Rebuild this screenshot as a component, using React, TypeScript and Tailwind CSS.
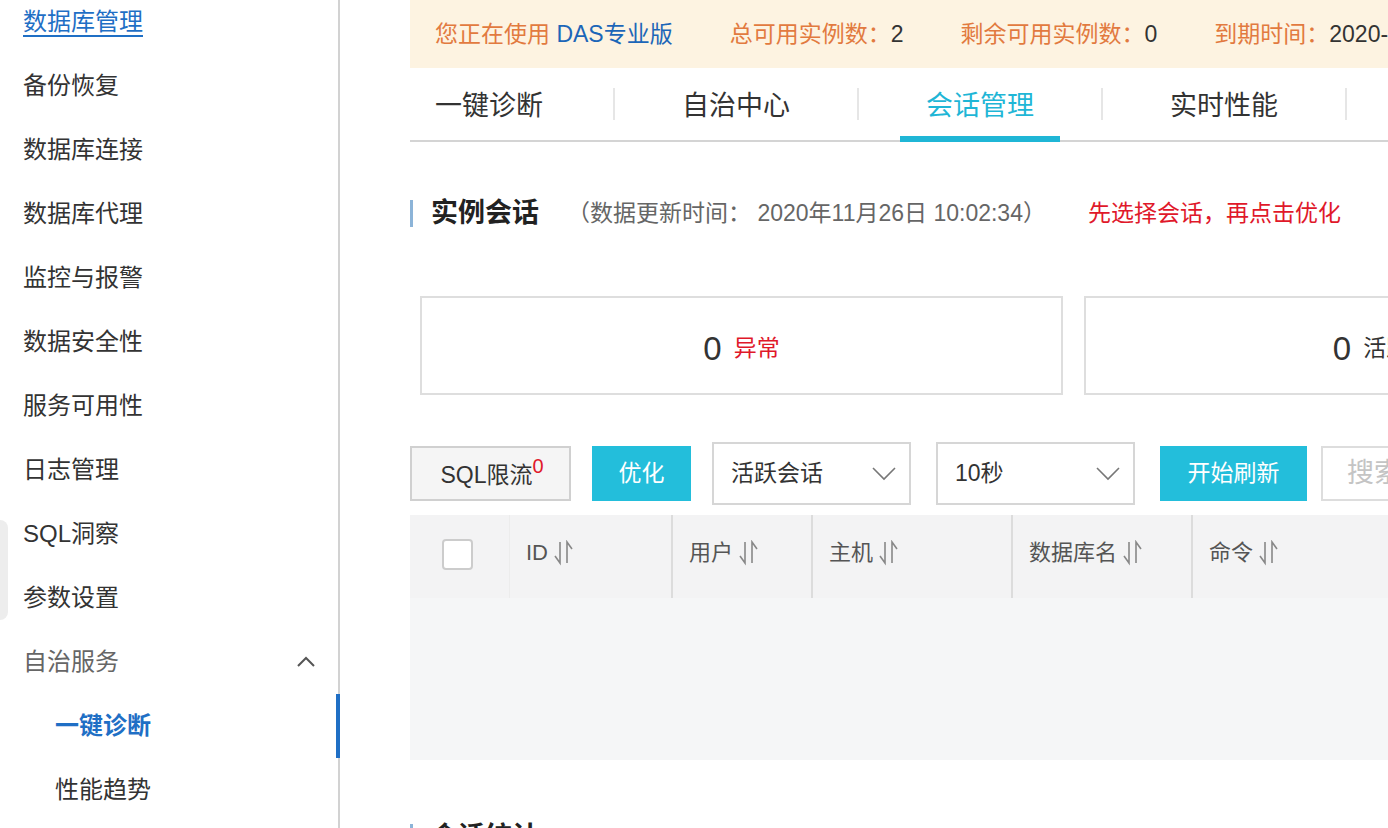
import * as React from "react";

/* DAS console — 会话管理 page: sidebar nav + banner, tabs, session stats, toolbar, table */

const NAV = [
  "数据库管理",
  "备份恢复",
  "数据库连接",
  "数据库代理",
  "监控与报警",
  "数据安全性",
  "服务可用性",
  "日志管理",
  "SQL洞察",
  "参数设置",
];

const TABS = ["自治中心", "会话管理", "实时性能"];

const COLS = [
  { label: "ID", w: "w-[161px]" },
  { label: "用户", w: "w-[140px]" },
  { label: "主机", w: "w-[200px]" },
  { label: "数据库名", w: "w-[180px]" },
  { label: "命令", w: "w-[200px]" },
];

export default function App() {
  return (
    <div className="flex h-[828px] w-[1388px] overflow-hidden bg-white font-['Liberation_Sans','Noto_Sans_CJK_SC',sans-serif] text-[#333]">
      <Sidebar />
      <main className="min-w-0 flex-1 overflow-hidden pl-[70px]">
        <div className="w-[1400px]">
          <Banner />
          <Tabs />
          <SectionTitle title="实例会话" className="mt-[58px]">
            <span className="ml-[28px] text-[23px] text-[#666]">
              （数据更新时间： 2020年11月26日 10:02:34）
            </span>
            <span className="ml-[42px] text-[23px] text-[#e0182a]">
              先选择会话，再点击优化
            </span>
          </SectionTitle>

          {/* stat cards */}
          <div className="mt-[69px] flex gap-[21px] pl-[10px]">
            <StatCard label="异常" labelClass="text-[#e0182a]" />
            <StatCard label="活跃会话数" labelClass="text-[#333]" />
          </div>

          <Toolbar />
          <SessionTable />

          <SectionTitle title="会话统计" className="mt-[64px]" />
        </div>
      </main>
    </div>
  );
}

/* ─── sidebar ─────────────────────────────────────────────────────────── */
function Sidebar() {
  return (
    <aside className="relative w-[340px] shrink-0 border-r-2 border-[#d2d2d2]">
      {/* scrollbar-like tab on the left edge */}
      <div className="absolute left-0 top-[520px] h-[100px] w-[8px] rounded-r-[8px] bg-[#ededed]" />
      <ul className="-mt-[10px] text-[24px]">
        {NAV.map((n, i) => (
          <li key={n} className="flex h-16 items-center pl-[23px]">
            {i === 0 ? (
              <span className="text-[#1f6fc5] underline decoration-2 underline-offset-[5px]">{n}</span>
            ) : (
              <span>{n}</span>
            )}
          </li>
        ))}
        <li className="flex h-16 items-center justify-between pl-[23px] pr-[22px] text-[#666]">
          <span>自治服务</span>
          <svg width="20" height="12" viewBox="0 0 20 12" fill="none" stroke="#555" strokeWidth="2">
            <path d="M2 10 L10 2 L18 10" />
          </svg>
        </li>
        <li className="relative flex h-16 items-center pl-[55px] font-bold text-[#1f6fc5]">
          一键诊断
          <span className="absolute -right-[2px] top-0 h-full w-[4px] bg-[#1f6fc5]" />
        </li>
        <li className="flex h-16 items-center pl-[55px]">性能趋势</li>
      </ul>
    </aside>
  );
}

/* ─── banner + tabs ───────────────────────────────────────────────────── */
function Banner() {
  return (
    <div className="flex h-[68px] items-center gap-[57px] bg-[#fdf3e1] pl-[25px] text-[23px] text-[#e27a3f]">
      <span>
        您正在使用 <span className="text-[#1c66b8]">DAS专业版</span>
      </span>
      <span>
        总可用实例数：<span className="text-[#333]">2</span>
      </span>
      <span>
        剩余可用实例数：<span className="text-[#333]">0</span>
      </span>
      <span>
        到期时间：<span className="text-[#333]">2020-12-26</span>
      </span>
    </div>
  );
}

function Tabs() {
  return (
    <div className="flex h-[74px] items-center border-b-2 border-[#d4d4d4] text-[27px]">
      <div className="flex h-full w-[203px] items-center pl-[25px] pt-[4px]">一键诊断</div>
      {TABS.map((t) => {
        const active = t === "会话管理";
        return (
          <React.Fragment key={t}>
            <span className="h-[32px] w-[2px] bg-[#e6e6e6]" />
            <div className="flex h-full w-[242px] flex-col items-center">
              <div className={`flex flex-1 items-center pt-[8px] ${active ? "text-[#1fb6d6]" : ""}`}>{t}</div>
              <div className={`-mb-[2px] h-[6px] w-[160px] ${active ? "bg-[#1fb6d6]" : "bg-transparent"}`} />
            </div>
          </React.Fragment>
        );
      })}
      <span className="h-[32px] w-[2px] bg-[#e6e6e6]" />
    </div>
  );
}

function SectionTitle({
  title,
  className,
  children,
}: {
  title: string;
  className?: string;
  children?: React.ReactNode;
}) {
  return (
    <div className={`flex h-[27px] items-center border-l-[3px] border-[#8cb4d8] pl-[18px] ${className ?? ""}`}>
      <span className="text-[27px] font-bold text-[#222]">{title}</span>
      {children}
    </div>
  );
}

function StatCard({ label, labelClass }: { label: string; labelClass: string }) {
  return (
    <div className="flex h-[99px] w-[643px] shrink-0 items-center justify-center border-2 border-[#dedede] pt-[6px]">
      <span className="text-[33px] font-light text-[#333]">0</span>
      <span className={`ml-[12px] text-[23px] ${labelClass}`}>{label}</span>
    </div>
  );
}

/* ─── toolbar ─────────────────────────────────────────────────────────── */
function Chevron() {
  return (
    <svg width="24" height="14" viewBox="0 0 24 14" fill="none" stroke="#777" strokeWidth="1.6">
      <path d="M1 1 L12 12 L23 1" />
    </svg>
  );
}

function Select({ value }: { value: string }) {
  return (
    <div className="flex h-[63px] w-[199px] shrink-0 items-center justify-between border-2 border-[#d6d6d6] pl-[17px] pr-[13px] text-[23px]">
      <span>{value}</span>
      <Chevron />
    </div>
  );
}

function Toolbar() {
  return (
    <div className="mt-[47px] flex h-[63px] items-center text-[23px]">
      <button className="h-[55px] w-[161px] shrink-0 border-2 border-[#d0d0d0] bg-[#f5f5f5] pl-[3px] pt-[4px] text-center">
        <span>
          SQL限流<sup className="text-[20px] text-[#e0182a]">0</sup>
        </span>
      </button>
      <button className="ml-[21px] h-[55px] w-[99px] shrink-0 bg-[#23bedb] text-white">优化</button>
      <div className="ml-[21px]">
        <Select value="活跃会话" />
      </div>
      <div className="ml-[25px]">
        <Select value="10秒" />
      </div>
      <button className="ml-[25px] h-[55px] w-[147px] shrink-0 bg-[#23bedb] text-white">开始刷新</button>
      <div className="ml-[14px] flex h-[55px] w-[300px] shrink-0 items-center border-2 border-[#dddddd] pl-[24px] text-[27px] text-[#c4c4c4]">
        搜索
      </div>
    </div>
  );
}

/* ─── table ───────────────────────────────────────────────────────────── */
function SortIcon() {
  return (
    <svg width="24" height="26" viewBox="0 0 24 26" fill="none" stroke="#888" strokeWidth="1.6" className="ml-[4px]">
      <path d="M8 2 V23 L3 16" />
      <path d="M15 23 V2 L20 9" />
    </svg>
  );
}

function SessionTable() {
  return (
    <div className="mt-[10px]">
      <div className="flex h-[83px] bg-[#f3f3f4] text-[22px] text-[#555]">
        <div className="flex w-[100px] items-center border-r border-[#ececec] pb-[4px] pl-[32px]">
          <span className="h-[31px] w-[31px] rounded-[4px] border-2 border-[#cccccc] bg-white" />
        </div>
        {COLS.map((c, i) => (
          <div
            key={c.label}
            className={`flex items-center pb-[8px] pl-[16px] ${c.w} ${i > 0 ? "border-l-2 border-[#dcdcdc]" : ""}`}
          >
            {c.label}
            <SortIcon />
          </div>
        ))}
      </div>
      <div className="h-[162px] bg-[#f5f6f7]" />
    </div>
  );
}
